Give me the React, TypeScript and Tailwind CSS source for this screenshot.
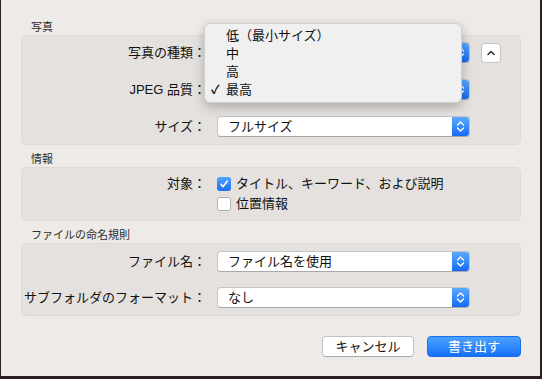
import type { ReactNode } from "react";

const Chevrons = () => (
  <svg width="9" height="13" viewBox="0 0 9 13" fill="none">
    <path d="M1.5 5L4.5 2L7.5 5" stroke="white" strokeWidth="1.4" strokeLinecap="round" strokeLinejoin="round" />
    <path d="M1.5 8L4.5 11L7.5 8" stroke="white" strokeWidth="1.4" strokeLinecap="round" strokeLinejoin="round" />
  </svg>
);

const Popup = ({ value }: { value: string }) => (
  <div className="flex h-[21px] w-[253px] overflow-hidden rounded-[4px] border border-[#c4c4c4] border-b-[#a9a9a9] bg-white">
    <span className="flex-1 pl-[10px] text-[13px] leading-[19px] text-[#111]">{value}</span>
    <div className="flex w-[17px] items-center justify-center bg-linear-to-b from-[#5aaaff] to-[#1569f3]">
      <Chevrons />
    </div>
  </div>
);

const Row = ({ label, children, className = "" }: { label: string; children: ReactNode; className?: string }) => (
  <div className={"flex items-center " + className}>
    <div className="w-[184px] whitespace-nowrap text-right text-[13px] text-[#111]">{label}</div>
    <div className="ml-[11px] flex items-center">{children}</div>
  </div>
);

const Check = ({ checked }: { checked: boolean }) =>
  checked ? (
    <div className="flex h-[14px] w-[14px] items-center justify-center rounded-[3px] bg-linear-to-b from-[#4ea4ff] to-[#1b6ff5]">
      <svg width="10" height="10" viewBox="0 0 10 10" fill="none">
        <path d="M2 5.3L4.1 7.6L8.2 2.2" stroke="white" strokeWidth="1.6" strokeLinecap="round" strokeLinejoin="round" />
      </svg>
    </div>
  ) : (
    <div className="h-[14px] w-[14px] rounded-[3px] border border-[#b3b3b3] bg-white" />
  );

const Heading = ({ children }: { children: ReactNode }) => (
  <div className="h-[15px] pl-[10px] text-[11px] leading-[15px] text-[#2c2c2c]">{children}</div>
);

const box = "w-[500px] rounded-[5px] border border-[#dcd9d6] bg-[#e4e1de]";

export default function App() {
  return (
    <div className="h-[379px] w-[542px] bg-[#2b1f1f] font-['Liberation_Sans','Noto_Sans_CJK_JP',sans-serif]">
      <div className="relative ml-px flex h-[376px] w-[539px] flex-col bg-[#edeae7] px-[20px] pt-[20px]">
        <Heading>写真</Heading>
        <div className={box + " h-[110px] pt-[6px]"}>
          {/* values of the first two popups sit under the open menu */}
          <Row label="写真の種類：">
            <Popup value="" />
            <div className="ml-[11px] flex h-[20px] w-[20px] items-center justify-center rounded-[4px] border border-[#c4c4c4] bg-white">
              <svg width="8" height="6" viewBox="0 0 8 6" fill="none">
                <path d="M1 4.5L4 1.5L7 4.5" stroke="#222" strokeWidth="1.4" strokeLinecap="round" strokeLinejoin="round" />
              </svg>
            </div>
          </Row>
          <Row label="JPEG 品質：" className="mt-[16px]">
            <Popup value="" />
          </Row>
          <Row label="サイズ：" className="mt-[16px]">
            <Popup value="フルサイズ" />
          </Row>
        </div>

        <div className="mt-[7px]">
          <Heading>情報</Heading>
        </div>
        <div className={box + " h-[54px] pt-[6px]"}>
          <Row label="対象：" className="h-[20px]">
            <Check checked />
            <span className="ml-[5px] text-[13px] text-[#111]">タイトル、キーワード、および説明</span>
          </Row>
          <Row label="" className="h-[20px]">
            <Check checked={false} />
            <span className="ml-[5px] text-[13px] text-[#111]">位置情報</span>
          </Row>
        </div>

        <div className="mt-[7px]">
          <Heading>ファイルの命名規則</Heading>
        </div>
        <div className={box + " h-[73px] pt-[7px]"}>
          <Row label="ファイル名：">
            <Popup value="ファイル名を使用" />
          </Row>
          <Row label="サブフォルダのフォーマット：" className="mt-[15px]">
            <Popup value="なし" />
          </Row>
        </div>

        <div className="mt-[20px] flex w-[500px] justify-end gap-[13px]">
          <button className="h-[21px] w-[92px] rounded-[4px] border border-[#c2c2c2] border-b-[#a8a8a8] bg-white text-[13px] leading-[19px] text-[#111]">
            キャンセル
          </button>
          <button className="h-[21px] w-[94px] rounded-[4px] border border-[#1a6ef0] bg-linear-to-b from-[#4aa2fe] to-[#1670f6] text-[13px] leading-[19px] text-white">
            書き出す
          </button>
        </div>

        <div className="absolute left-[203px] top-[23px] h-[80px] w-[258px] rounded-[6px] border border-[#cfcfcf] bg-[#f0f0f0] pt-[3px] shadow-[0_4px_12px_rgba(0,0,0,0.25)]">
          {["低（最小サイズ）", "中", "高", "最高"].map((t) => (
            <div key={t} className="relative h-[18px] pl-[21px] text-[13px] leading-[18px] text-[#111]">
              {t === "最高" && <span className="absolute left-[6px] top-0 text-[12px] font-bold">✓</span>}
              {t}
            </div>
          ))}
        </div>
      </div>
    </div>
  );
}
